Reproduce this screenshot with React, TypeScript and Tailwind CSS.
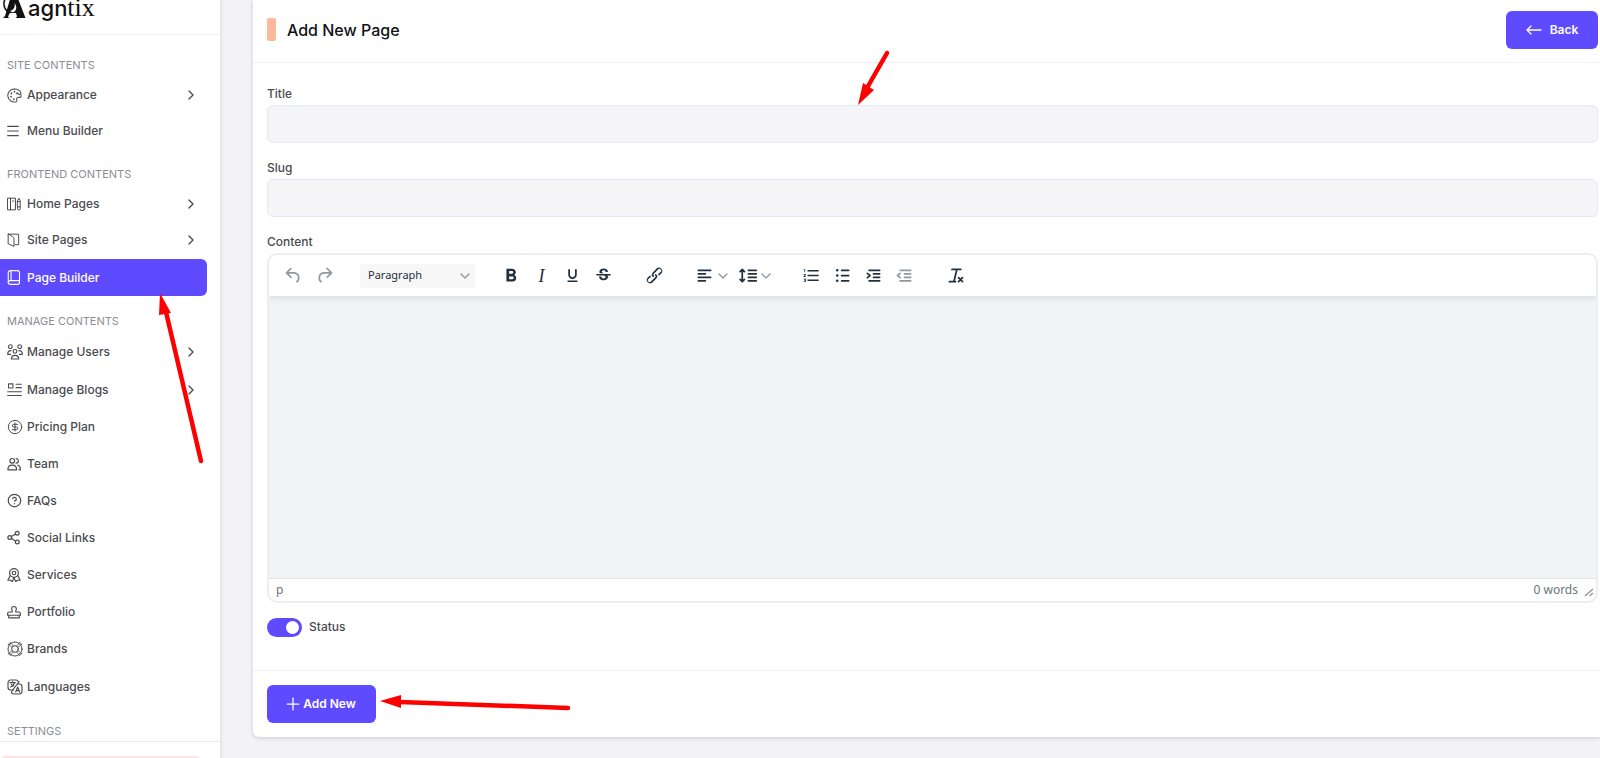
import { useState } from "react";
import type { ReactNode } from "react";
import clsx from "clsx";
import {
  ChevronDown,
  ChevronRight,
  CircleDollarSign,
  CircleQuestionMark,
  Menu,
  Plus,
  Share2,
} from "lucide-react";
import {
  MdFormatBold,
  MdFormatListNumbered,
  MdFormatUnderlined,
  MdStrikethroughS,
} from "react-icons/md";

function Line({ size = 14, weight = 1.7, children }: { size?: number; weight?: number; children: ReactNode }) {
  return (
    <svg
      width={size}
      height={size}
      viewBox="0 0 24 24"
      fill="none"
      stroke="currentColor"
      strokeWidth={weight}
      strokeLinecap="round"
      strokeLinejoin="round"
      aria-hidden="true"
    >
      {children}
    </svg>
  );
}

const PaletteIcon = () => (
  <Line size={15}>
    <path d="M12 1.500a10.500 10.500 0 1 0 3 20.500c2-.8 0-3 .5-5s2.500-2.500 5-2c2 .2 2-1.500 2-3.500" />
    <path d="M12 1.500c5 0 10 3 10.500 8-1.500 1.500-4 1-4.500-1" />
    <path d="M7 8v1M12 5.500v1M6.500 13.500v1M11 17.500v1M16 8v1" strokeWidth={2.5} />
  </Line>
);

const HomePagesIcon = () => (
  <Line>
    <path d="M1.500 2h13v20h-13zM6 2v20M9.500 7h2" />
    <path d="M18 6.500 20.300 2l2.300 4.500V20a2.300 2.300 0 0 1-4.600 0zM18 17h4.500M18 8h4.500" />
  </Line>
);

const SitePagesIcon = () => (
  <Line>
    <path d="M2 2h18v18h-6" />
    <path d="M2 2v16.500L12 23V9.500Q12 7 9.500 6z" />
  </Line>
);

const BookIcon = () => (
  <Line size={15}>
    <rect x="2" y="1" width="18" height="22" rx="3.500" />
    <path d="M6.500 1v16M20 17H5.500a3.500 3 0 0 0-3.500 3" />
  </Line>
);

const UsersIcon = () => (
  <Line size={16}>
    <circle cx="5" cy="4" r="2.800" />
    <circle cx="19" cy="4" r="2.800" />
    <circle cx="12" cy="11" r="2.800" />
    <path d="M6.500 22.500c0-3.500 2-5.500 5.500-5.500s5.500 2 5.500 5.500z" />
    <path d="M5.500 15.500H1c0-3.500 1.500-5.500 5-5.500M18.500 15.500H23c0-3.500-1.500-5.500-5-5.500" />
  </Line>
);

const BlogsIcon = () => (
  <Line size={15}>
    <path d="M2.500 3h7v6.500h-7zM14.500 3.500H23M14.500 9H23M1 15.500h22M1 21.500h22" />
  </Line>
);

const TeamIcon = () => (
  <Line weight={2}>
    <circle cx="9" cy="6.500" r="4" />
    <path d="M1.500 22c0-5 2-8 7.500-8s7.500 3 7.500 8z" />
    <path d="M15.500 2.500a4 4 0 0 1 0 8M18.500 14c3 .8 4.500 3.500 4.500 8h-2.500" />
  </Line>
);

const ServicesIcon = () => (
  <Line weight={2}>
    <circle cx="12" cy="8.500" r="7.500" />
    <circle cx="12" cy="8.500" r="3" />
    <path d="M5.500 13 1.500 21h4.500L9 23.500l3-7 3 7 3-2.500h4.500l-4-8" />
  </Line>
);

const StampIcon = () => (
  <Line weight={2}>
    <path d="M9 12c.5-2-1-3-1-5.500a4 4 0 0 1 8 0c0 2.500-1.500 3.500-1 5.500h5a3 3 0 0 1 3 3v2.500H1V15a3 3 0 0 1 3-3z" />
    <path d="M3 17.500v4.500h18v-4.500" />
  </Line>
);

const BrandsIcon = () => (
  <Line size={16} weight={1.5}>
    <circle cx="12" cy="12" r="10.500" />
    <circle cx="12" cy="12" r="5" />
    <path d="M2 5 5 2l4.500 5.500M2 5l5.500 4.500M22 5l-3-3-4.500 5.500M22 5l-5.500 4.500M2 19l3 3 4.500-5.500M2 19l5.500-4.500M22 19l-3 3-4.500-5.500M22 19l-5.500-4.500" strokeWidth={1.2} />
  </Line>
);

const LanguagesIcon = () => (
  <Line size={16}>
    <path d="M10 16.500H5.500a4 4 0 0 1-4-4v-7a4 4 0 0 1 4-4h8a4 4 0 0 1 3.500 2.500" />
    <path d="M16 7.500h2.500a4 4 0 0 1 4 4v7a4 4 0 0 1-4 4h-8a4 4 0 0 1-4-3M18 4 6.500 19.500" />
    <path d="M4.500 5.500h8M8.500 4v1.500M5.500 12c3-1 5-3.500 5.500-6.500M6.500 8c.8 1.500 2 2.500 3 3" />
    <path d="m13 19.500 3-7.500 3 7.500M14 17.500h4" />
  </Line>
);

type Item = {
  label: string;
  icon: ReactNode;
  expandable?: boolean;
  active?: boolean;
  height: string;
};

const groups: { title: string; items: Item[] }[] = [
  {
    title: "SITE CONTENTS",
    items: [
      { label: "Appearance", icon: <PaletteIcon />, expandable: true, height: "h-9" },
      { label: "Menu Builder", icon: <Menu size={16} strokeWidth={1.7} className="-ml-0.5" />, height: "h-9" },
    ],
  },
  {
    title: "FRONTEND CONTENTS",
    items: [
      { label: "Home Pages", icon: <HomePagesIcon />, expandable: true, height: "h-9" },
      { label: "Site Pages", icon: <SitePagesIcon />, expandable: true, height: "h-9" },
      { label: "Page Builder", icon: <BookIcon />, active: true, height: "h-[37px]" },
    ],
  },
  {
    title: "MANAGE CONTENTS",
    items: [
      { label: "Manage Users", icon: <UsersIcon />, expandable: true, height: "h-[38px]" },
      { label: "Manage Blogs", icon: <BlogsIcon />, expandable: true, height: "h-[37px]" },
      { label: "Pricing Plan", icon: <CircleDollarSign size={16} strokeWidth={1.5} />, height: "h-[37px]" },
      { label: "Team", icon: <TeamIcon />, height: "h-[37px]" },
      { label: "FAQs", icon: <CircleQuestionMark size={15} />, height: "h-[37px]" },
      { label: "Social Links", icon: <Share2 size={15} className="-ml-px" />, height: "h-[37px]" },
      { label: "Services", icon: <ServicesIcon />, height: "h-[37px]" },
      { label: "Portfolio", icon: <StampIcon />, height: "h-[37px]" },
      { label: "Brands", icon: <BrandsIcon />, height: "h-[38px]" },
      { label: "Languages", icon: <LanguagesIcon />, height: "h-[38px]" },
    ],
  },
  { title: "SETTINGS", items: [] },
];

function Sidebar() {
  return (
    <aside className="flex h-screen w-[221px] shrink-0 flex-col overflow-hidden border-r border-[#e6e6ea] bg-white shadow-sm">
      <div className="flex h-[35px] shrink-0 items-start border-b border-[#f3f3f5] pl-0.5">
        <a href="#" aria-label="agntix" className="-mt-[7px] flex items-end text-[#121212]">
          <svg width="24" height="25" viewBox="0 0 24 25" className="mb-1" aria-hidden="true">
            <path d="M9 3h6l8.500 22H13.500l1.500-1.500-1-3.500H8l-2 3.500 1 1.500H1l2-2z" fill="currentColor" />
            <path d="M8 18c3.500-1 5.500-4 4.500-8 3 4 2 8-1.500 9.500z" fill="#fff" />
            <path d="M7 19C1.500 17 .5 9 4 5" fill="none" stroke="currentColor" strokeWidth="1.500" />
          </svg>
          <span className="pl-0.5 font-['Inter'] text-[22px] leading-7 font-medium">agn</span>
          <span className="font-['Liberation_Serif'] text-[26px] leading-7">tix</span>
        </a>
      </div>
      <nav className="min-h-0 flex-1 overflow-hidden pt-[5px]">
        {groups.map((group) => (
          <section key={group.title}>
            <h2 className="mt-[17px] mb-1 pl-[7px] text-[11px] leading-4 text-[#8d8d92]">{group.title}</h2>
            <ul>
              {group.items.map((item) => (
                <li key={item.label}>
                  <a
                    href="#"
                    className={clsx(
                      "mr-[13px] flex items-center pr-2 pl-[7px] text-xs font-medium",
                      item.height,
                      item.active ? "mt-px rounded-r-md bg-[#5f4bff] text-white" : "text-[#4b4b4f]"
                    )}
                  >
                    <span className="flex w-5 shrink-0 items-center">{item.icon}</span>
                    <span className="flex-1">{item.label}</span>
                    {item.expandable && <ChevronRight size={16} />}
                  </a>
                </li>
              ))}
            </ul>
          </section>
        ))}
      </nav>
      <div className="h-[17px] shrink-0 overflow-hidden border-t border-[#ececef] pt-3.5">
        <div className="mr-[18px] h-9 rounded-md bg-[#fde4e4]" />
      </div>
    </aside>
  );
}

function Glyph({ children }: { children: ReactNode }) {
  return (
    <svg width="21" height="21" viewBox="0 0 24 24" fill="currentColor" aria-hidden="true">
      {children}
    </svg>
  );
}

function Tool({ label, muted, children }: { label: string; muted?: boolean; children: ReactNode }) {
  return (
    <button
      type="button"
      aria-label={label}
      className={clsx(
        "flex h-7 w-[31px] items-center justify-center",
        muted ? "text-[#91979f]" : "text-[#222f3e]"
      )}
    >
      {children}
    </button>
  );
}

function SplitTool({ label, children }: { label: string; children: ReactNode }) {
  return (
    <button type="button" aria-label={label} className="flex h-7 w-[43px] items-center pl-1 text-[#222f3e]">
      {children}
      <ChevronDown size={16} className="shrink-0 text-[#91979f]" />
    </button>
  );
}

function Toolbar() {
  return (
    <div className="relative flex h-[41px] items-center gap-5 bg-white pl-[9px] shadow-[0_2px_6px_rgba(34,47,62,0.12)]">
      <div className="flex">
        <Tool label="Undo" muted>
          <Glyph>
            <path d="M6.400 8H12c3.700 0 6.200 2 6.800 5.100.6 2.700-.4 5.600-2.300 6.800a1 1 0 0 1-1-1.800c1.100-.6 1.800-2.700 1.400-4.600-.5-2.100-2.100-3.500-4.900-3.500H6.400l3.300 3.300a1 1 0 1 1-1.400 1.400l-5-5a1 1 0 0 1 0-1.400l5-5a1 1 0 0 1 1.400 1.400L6.400 8Z" />
          </Glyph>
        </Tool>
        <Tool label="Redo" muted>
          <Glyph>
            <path d="M17.600 10H12c-2.800 0-4.400 1.400-4.900 3.500-.4 2 .3 4 1.400 4.600a1 1 0 1 1-1 1.800c-2-1.200-2.900-4.100-2.300-6.800.6-3 3-5.100 6.800-5.100h5.600l-3.300-3.300a1 1 0 1 1 1.400-1.400l5 5a1 1 0 0 1 0 1.400l-5 5a1 1 0 0 1-1.400-1.400l3.300-3.300Z" />
          </Glyph>
        </Tool>
      </div>
      <div className="grid items-center">
        <select
          aria-label="Block format"
          className="col-start-1 row-start-1 h-6 w-[115px] appearance-none rounded-[3px] bg-[#f7f7f7] pl-2 font-['Noto_Sans',sans-serif] text-[11px] text-[#222f3e]"
        >
          <option>Paragraph</option>
        </select>
        <ChevronDown
          size={16}
          className="pointer-events-none col-start-1 row-start-1 mr-0.5 justify-self-end text-[#91979f]"
        />
      </div>
      <div className="flex">
        <Tool label="Bold"><MdFormatBold size={22} /></Tool>
        <Tool label="Italic"><span className="font-['Liberation_Serif',serif] text-lg leading-none italic">I</span></Tool>
        <Tool label="Underline"><MdFormatUnderlined size={17} /></Tool>
        <Tool label="Strikethrough"><MdStrikethroughS size={19} /></Tool>
      </div>
      <Tool label="Insert link">
        <Glyph>
          <path d="M6.200 12.300a1 1 0 0 1 1.400 1.400l-2 2a2 2 0 1 0 2.600 2.800l4.800-4.800a1 1 0 0 0 0-1.400 1 1 0 1 1 1.400-1.300 2.900 2.900 0 0 1 0 4L9.600 20a3.900 3.900 0 0 1-5.500-5.500l2-2Zm11.600-.6a1 1 0 0 1-1.400-1.400l2-2a2 2 0 1 0-2.600-2.800L11 10.300a1 1 0 0 0 0 1.400A1 1 0 1 1 9.600 13a2.900 2.900 0 0 1 0-4L14.400 4a3.900 3.900 0 0 1 5.500 5.500l-2 2Z" />
        </Glyph>
      </Tool>
      <div className="flex">
        <SplitTool label="Align">
          <Line size={21} weight={2}>
            <path d="M5 6h14M5 10h8M5 14h14M5 18h8" />
          </Line>
        </SplitTool>
        <SplitTool label="Line height">
          <Line size={21} weight={2}>
            <path d="M13 6h9M13 10h9M13 14h9M13 18h9M6 5v14M3.500 7.500 6 5l2.500 2.500M3.500 16.500 6 19l2.500-2.500" />
          </Line>
        </SplitTool>
      </div>
      <div className="flex">
        <Tool label="Numbered list"><MdFormatListNumbered size={19} /></Tool>
        <Tool label="Bullet list">
          <Line size={21} weight={2}>
            <path d="M11 6h8M11 12h8M11 18h8" />
            <path d="M6 6h.01M6 12h.01M6 18h.01" strokeWidth={3} />
          </Line>
        </Tool>
        <Tool label="Increase indent">
          <Line size={21} weight={2}>
            <path d="M7 6h12M12 10h7M12 14h7M7 18h12M5 9.500 8 12l-3 2.500" />
          </Line>
        </Tool>
        <Tool label="Decrease indent" muted>
          <Line size={21} weight={2}>
            <path d="M7 6h12M12 10h7M12 14h7M7 18h12M7 9.500 4 12l3 2.500" />
          </Line>
        </Tool>
      </div>
      <Tool label="Clear formatting">
        <Line size={21} weight={2}>
          <path d="M8 5h10M13.500 5l-3 13M5 19h7M15.500 14.500l4.500 4.500M20 14.500 15.500 19" />
        </Line>
      </Tool>
    </div>
  );
}

function Editor() {
  return (
    <div className="overflow-hidden rounded-[10px] border-2 border-[#eeeeee] bg-white">
      <Toolbar />
      <textarea
        id="content"
        className="block h-[282px] w-full resize-none bg-[#f2f3f5] p-4 outline-none"
      />
      <div className="flex h-[23px] items-center border-t border-[#e3e5e8] pr-0.5 pl-[7px] font-['Noto_Sans',sans-serif] text-xs text-[#6b7480]">
        <span className="flex-1">p</span>
        <span>0 words</span>
        <svg width="10" height="10" viewBox="0 0 10 10" className="mt-1 ml-1.5" aria-hidden="true">
          <path d="M1 9l8-7M5.500 9 9 6" stroke="#8a919a" strokeWidth="1.300" fill="none" />
        </svg>
      </div>
    </div>
  );
}

// Red pointers drawn over the page for the walkthrough
const pointers = [
  { line: "M887 53 867 88", head: "858,105 863,83 874,90" },
  { line: "M201 461 166 312", head: "160,293 159,315 171,313" },
  { line: "M568 708 400 702", head: "380,701 401,695 401,708" },
];

function Pointers() {
  return (
    <svg className="pointer-events-none absolute inset-0 h-full w-full" aria-hidden="true">
      {pointers.map((p) => (
        <g key={p.head} fill="#ff0000" stroke="#ff0000">
          <path d={p.line} strokeWidth="4.500" strokeLinecap="round" />
          <polygon points={p.head} stroke="none" />
        </g>
      ))}
    </svg>
  );
}

export default function App() {
  const [title, setTitle] = useState("");
  const [slug, setSlug] = useState("");
  const [status, setStatus] = useState(true);

  const labelClass = "block text-xs leading-[26px] -mb-0.5 font-medium text-[#4b4b4f]";
  const inputClass =
    "mb-3 block h-[38px] w-full rounded-md border border-[#e6e6fd] bg-[#f5f5f8] px-3 text-sm outline-none";

  return (
    <div className="relative flex h-screen overflow-hidden bg-[#f3f3f6] font-['Inter',sans-serif]">
      <Sidebar />
      <main className="min-w-0 flex-1 pl-8">
        <form className="rounded-bl-md bg-white shadow-[0_1px_4px_rgba(0,0,0,0.16)]" onSubmit={(e) => e.preventDefault()}>
          <header className="flex h-[63px] items-center border-b border-[#f1f1f4] pr-0.5 pb-[3px] pl-3.5">
            <span className="mr-[11px] h-[23px] w-[9px] rounded-xs bg-[#ffb899]" />
            <h1 className="flex-1 text-base font-medium text-[#121217]">Add New Page</h1>
            <button
              type="button"
              className="flex h-[38px] w-[92px] items-center justify-center gap-2 rounded-md bg-[#5f4bff] text-xs font-semibold text-white"
            >
              <svg width="16" height="10" viewBox="0 0 16 10" fill="none" stroke="currentColor" strokeWidth="1.300" strokeLinecap="round" strokeLinejoin="round" aria-hidden="true">
                <path d="M15 5H1M5 1 1 5l4 4" />
              </svg>
              Back
            </button>
          </header>

          <div className="pt-[18px] pr-0.5 pl-3.5">
            <label htmlFor="title" className={labelClass}>Title</label>
            <input id="title" className={inputClass} value={title} onChange={(e) => setTitle(e.target.value)} />
            <label htmlFor="slug" className={labelClass}>Slug</label>
            <input id="slug" className={inputClass} value={slug} onChange={(e) => setSlug(e.target.value)} />
            <label htmlFor="content" className={labelClass}>Content</label>
            <Editor />
            <div className="flex items-center gap-[7px] pt-3.5 pb-[33px]">
              <input
                id="status"
                type="checkbox"
                role="switch"
                checked={status}
                onChange={(e) => setStatus(e.target.checked)}
                className="flex h-[19px] w-[35px] appearance-none items-center rounded-full bg-[#c9c9d2] px-[3px] before:size-[13px] before:rounded-full before:bg-white checked:justify-end checked:bg-[#5f4bff]"
              />
              <label htmlFor="status" className="text-xs leading-5 font-medium text-[#4b4b4f]">Status</label>
            </div>
          </div>

          <footer className="border-t border-[#f1f1f4] py-3.5 pl-3.5">
            <button
              type="submit"
              className="flex h-[38px] w-[109px] items-center justify-center rounded-md bg-[#5f4bff] pr-1 text-xs font-semibold text-white"
            >
              <Plus size={20} strokeWidth={1.5} />
              Add New
            </button>
          </footer>
        </form>
      </main>
      <Pointers />
    </div>
  );
}
